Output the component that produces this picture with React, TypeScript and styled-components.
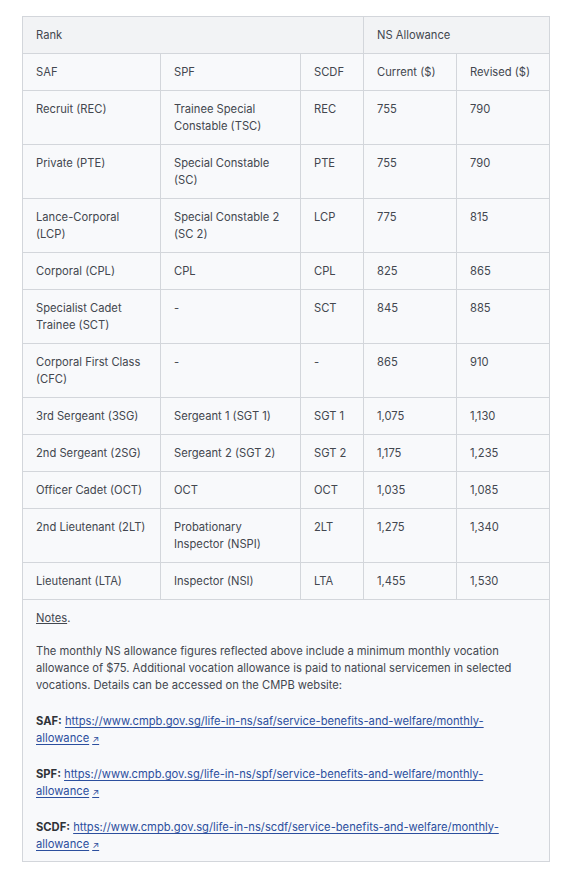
import React from "react";
import styled, { createGlobalStyle } from "styled-components";

const GlobalStyle = createGlobalStyle`
  html, body {
    margin: 0;
    padding: 0;
    background: #ffffff;
  }
  body {
    font-family: Inter, "Noto Sans", sans-serif;
  }
`;

const Page = styled.div`
  padding: 16px 20px 13px 22px;
  width: 527px;
`;

const Table = styled.table`
  width: 527px;
  border-collapse: collapse;
  table-layout: fixed;
  font-size: 11.2px;
  line-height: 17px;
  color: #43474f;
  border: 1px solid #d3d6db;
`;

const HeadCell = styled.th`
  background-color: #f2f3f5;
  font-weight: 400;
  text-align: left;
  vertical-align: top;
  padding: 10px 13px 9px 13px;
  border: 1px solid #d3d6db;
`;

const Cell = styled.td`
  background-color: #f8f9fb;
  vertical-align: top;
  padding: 10px 13px 9px 13px;
  border: 1px solid #d3d6db;
`;

const NotesCell = styled.td`
  background-color: #f8f9fb;
  padding: 10px 13px 8px 13px;
  border: 1px solid #d3d6db;
`;

const NotesTitle = styled.p`
  margin: 0;
  span {
    text-decoration: underline;
  }
`;

const Para = styled.p<{ gap: number }>`
  margin: ${(props) => props.gap}px 0 0 0;
`;

const Label = styled.strong`
  font-weight: 700;
  color: #2f3238;
`;

const Link = styled.a`
  color: #2c4f9e;
  text-decoration: underline;
  text-underline-offset: 2px;
`;

const Arrow = styled.span`
  font-size: 9px;
  margin-left: 3px;
`;

type Row = [string, string, string, string, string];

const rows: Row[] = [
  ["Recruit (REC)", "Trainee Special Constable (TSC)", "REC", "755", "790"],
  ["Private (PTE)", "Special Constable (SC)", "PTE", "755", "790"],
  ["Lance-Corporal (LCP)", "Special Constable 2 (SC 2)", "LCP", "775", "815"],
  ["Corporal (CPL)", "CPL", "CPL", "825", "865"],
  ["Specialist Cadet Trainee (SCT)", "-", "SCT", "845", "885"],
  ["Corporal First Class (CFC)", "-", "-", "865", "910"],
  ["3rd Sergeant (3SG)", "Sergeant 1 (SGT 1)", "SGT 1", "1,075", "1,130"],
  ["2nd Sergeant (2SG)", "Sergeant 2 (SGT 2)", "SGT 2", "1,175", "1,235"],
  ["Officer Cadet (OCT)", "OCT", "OCT", "1,035", "1,085"],
  ["2nd Lieutenant (2LT)", "Probationary Inspector (NSPI)", "2LT", "1,275", "1,340"],
  ["Lieutenant (LTA)", "Inspector (NSI)", "LTA", "1,455", "1,530"],
];

const links = [
  { label: "SAF:", url: "https://www.cmpb.gov.sg/life-in-ns/saf/service-benefits-and-welfare/monthly-allowance" },
  { label: "SPF:", url: "https://www.cmpb.gov.sg/life-in-ns/spf/service-benefits-and-welfare/monthly-allowance" },
  { label: "SCDF:", url: "https://www.cmpb.gov.sg/life-in-ns/scdf/service-benefits-and-welfare/monthly-allowance" },
];

const App: React.FC = () => {
  return (
    <Page>
      <GlobalStyle />
      <Table>
        <colgroup>
          <col style={{ width: 138 }} />
          <col style={{ width: 140 }} />
          <col style={{ width: 63 }} />
          <col style={{ width: 93 }} />
          <col style={{ width: 93 }} />
        </colgroup>
        <thead>
          <tr>
            <HeadCell colSpan={3}>Rank</HeadCell>
            <HeadCell colSpan={2}>NS Allowance</HeadCell>
          </tr>
        </thead>
        <tbody>
          <tr>
            <Cell>SAF</Cell>
            <Cell>SPF</Cell>
            <Cell>SCDF</Cell>
            <Cell>Current ($)</Cell>
            <Cell>Revised ($)</Cell>
          </tr>
          {rows.map((row) => (
            <tr key={row[0]}>
              {row.map((value, i) => (
                <Cell key={i}>{value}</Cell>
              ))}
            </tr>
          ))}
          <tr>
            <NotesCell colSpan={5}>
              <NotesTitle>
                <span>Notes</span>.
              </NotesTitle>
              <Para gap={16}>
                The monthly NS allowance figures reflected above include a minimum monthly
                vocation allowance of $75. Additional vocation allowance is paid to national
                servicemen in selected vocations. Details can be accessed on the CMPB website:
              </Para>
              {links.map((l) => (
                <Para gap={19} key={l.label}>
                  <Label>{l.label}</Label>{" "}
                  <Link href={l.url}>
                    {l.url}
                    <Arrow>↗</Arrow>
                  </Link>
                </Para>
              ))}
            </NotesCell>
          </tr>
        </tbody>
      </Table>
    </Page>
  );
};

export default App;
